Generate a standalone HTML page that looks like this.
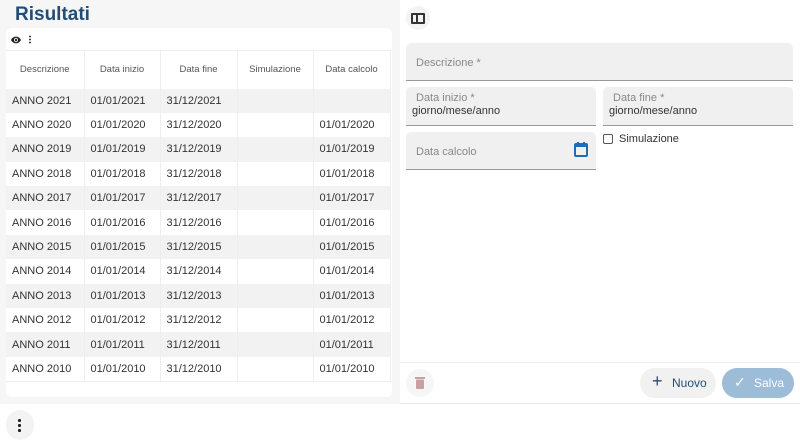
<!DOCTYPE html>
<html><head><meta charset="utf-8"><style>
*{box-sizing:border-box;margin:0;padding:0}
body{width:800px;height:447px;overflow:hidden;font-family:"Liberation Sans",Arial,sans-serif;background:#fff;position:relative;color:#333}
.left{position:absolute;left:0;top:0;width:400px;height:404px;background:#f6f6f6}
h1{position:absolute;left:15px;top:4px;font-size:19px;font-weight:bold;color:#1f4e79}
.card{position:absolute;left:6px;top:28px;width:386px;height:369px;background:#fff;border-radius:6px;overflow:hidden}
table{position:absolute;left:0;top:22px;border-collapse:collapse;font-size:11px}
td,th{border-right:1px solid #eee;height:24.4px;padding-left:6px;white-space:nowrap;font-weight:normal}
th{height:38px;font-size:9.5px;color:#555;text-align:center;border-top:1px solid #eee;padding:0}
tr.g td{background:#f2f2f2}
.right{position:absolute;left:400px;top:0;width:400px;height:404px;background:#fff;border-bottom:1px solid #e8e8e8}
.f{position:absolute;background:#f0f0f0;border-radius:5px 5px 0 0;border-bottom:1px solid #999;font-size:11px;color:#888}
.f .l{position:absolute;left:10px}
.f .v{position:absolute;left:6px;top:18px;color:#333;font-size:11px}
.btn{position:absolute;border-radius:15px;font-size:12px}
</style></head><body>
<div class="left">
<h1>Risultati</h1>
<div class="card">
<svg style="position:absolute;left:5px;top:8px" width="10" height="8" viewBox="0 0 24 16"><path d="M12 0C6 0 2 4 0 8c2 4 6 8 12 8s10-4 12-8c-2-4-6-8-12-8zm0 13a5 5 0 110-10 5 5 0 010 10zm0-8a3 3 0 100 6 3 3 0 000-6z" fill="#222"/></svg>
<div style="position:absolute;left:23px;top:7px;width:2px;height:9px;background:radial-gradient(circle,#444 45%,transparent 50%) 0 0/2px 3px"></div>
<table>
<tr><th style="width:78px">Descrizione</th><th style="width:76px">Data inizio</th><th style="width:77px">Data fine</th><th style="width:76px">Simulazione</th><th style="width:77px">Data calcolo</th></tr>
<tr class="g"><td>ANNO 2021</td><td>01/01/2021</td><td>31/12/2021</td><td></td><td></td></tr>
<tr><td>ANNO 2020</td><td>01/01/2020</td><td>31/12/2020</td><td></td><td>01/01/2020</td></tr>
<tr class="g"><td>ANNO 2019</td><td>01/01/2019</td><td>31/12/2019</td><td></td><td>01/01/2019</td></tr>
<tr><td>ANNO 2018</td><td>01/01/2018</td><td>31/12/2018</td><td></td><td>01/01/2018</td></tr>
<tr class="g"><td>ANNO 2017</td><td>01/01/2017</td><td>31/12/2017</td><td></td><td>01/01/2017</td></tr>
<tr><td>ANNO 2016</td><td>01/01/2016</td><td>31/12/2016</td><td></td><td>01/01/2016</td></tr>
<tr class="g"><td>ANNO 2015</td><td>01/01/2015</td><td>31/12/2015</td><td></td><td>01/01/2015</td></tr>
<tr><td>ANNO 2014</td><td>01/01/2014</td><td>31/12/2014</td><td></td><td>01/01/2014</td></tr>
<tr class="g"><td>ANNO 2013</td><td>01/01/2013</td><td>31/12/2013</td><td></td><td>01/01/2013</td></tr>
<tr><td>ANNO 2012</td><td>01/01/2012</td><td>31/12/2012</td><td></td><td>01/01/2012</td></tr>
<tr class="g"><td>ANNO 2011</td><td>01/01/2011</td><td>31/12/2011</td><td></td><td>01/01/2011</td></tr>
<tr style="border-bottom:1px solid #eee"><td>ANNO 2010</td><td>01/01/2010</td><td>31/12/2010</td><td></td><td>01/01/2010</td></tr>
</table>
</div>
</div>
<div class="right">
<div style="position:absolute;left:6px;top:6px;width:24px;height:24px;border-radius:12px;background:#f3f3f3"></div>
<div style="position:absolute;left:11px;top:13px;width:14px;height:11px;border:2px solid #333;border-radius:1px"></div>
<div style="position:absolute;left:16px;top:13px;width:2px;height:11px;background:#333"></div>
<div class="f" style="left:6px;top:43px;width:387px;height:38px"><span class="l" style="top:14px">Descrizione *</span></div>
<div class="f" style="left:6px;top:87px;width:190px;height:39px"><span class="l" style="top:5px">Data inizio *</span><span class="v">giorno/mese/anno</span></div>
<div class="f" style="left:203px;top:87px;width:190px;height:39px"><span class="l" style="top:5px">Data fine *</span><span class="v">giorno/mese/anno</span></div>
<div class="f" style="left:6px;top:132px;width:190px;height:38px"><span class="l" style="top:14px">Data calcolo</span>
<svg style="position:absolute;left:168px;top:10px" width="14" height="15" viewBox="0 0 14 15"><rect x="1" y="2" width="12" height="12" rx="1" fill="none" stroke="#1e6bb8" stroke-width="2"/><rect x="1" y="2" width="12" height="3" fill="#1e6bb8"/><rect x="3" y="0" width="2" height="3" fill="#1e6bb8"/><rect x="9" y="0" width="2" height="3" fill="#1e6bb8"/></svg></div>
<div style="position:absolute;left:203px;top:134px;width:10px;height:10px;border:1.5px solid #555;border-radius:2px"></div>
<span style="position:absolute;left:219px;top:133px;font-size:11px;color:#333">Simulazione</span>
<div style="position:absolute;left:0;top:362px;width:400px;height:1px;background:#eee"></div>
<div style="position:absolute;left:6px;top:369px;width:28px;height:28px;border-radius:14px;background:#f6f6f6"></div>
<svg style="position:absolute;left:15px;top:376px" width="10" height="13" viewBox="0 0 10 13"><rect x="0" y="1" width="10" height="2" fill="#c9a0a0"/><rect x="1" y="3.5" width="8" height="9.5" rx="1" fill="#c9a0a0"/></svg>
<div class="btn" style="left:240px;top:368px;width:76px;height:30px;background:#f1f1f1;color:#1f4e79"><span style="position:absolute;left:12px;top:3px;font-size:18px">+</span><span style="position:absolute;left:32px;top:8px">Nuovo</span></div>
<div class="btn" style="left:322px;top:368px;width:72px;height:30px;background:#9dbcd8;color:#fff"><span style="position:absolute;left:12px;top:6px;font-size:14px">✓</span><span style="position:absolute;left:32px;top:8px">Salva</span></div>
</div>
<div style="position:absolute;left:6px;top:410px;width:28px;height:30px;border-radius:14px;background:#f3f3f3"></div>
<div style="position:absolute;left:18px;top:418px;width:3px;height:14px;background:radial-gradient(circle,#222 55%,transparent 60%) 0 0/3px 5px"></div>
</body></html>
